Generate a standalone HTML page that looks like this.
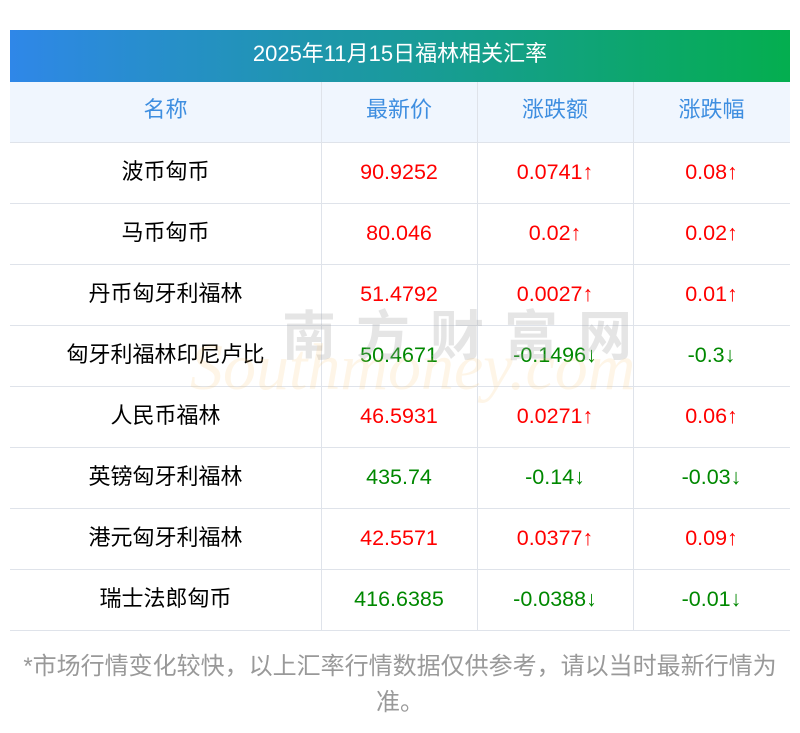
<!DOCTYPE html>
<html><head><meta charset="utf-8"><style>
body{margin:0;width:800px;height:733px;background:#fff;font-family:"Liberation Sans","Noto Sans CJK SC",sans-serif;position:relative;overflow:hidden}
.title{position:absolute;left:10px;top:30px;width:780px;height:52px;background:linear-gradient(90deg,#2f87e8,#04ae4f);color:#fff;font-size:22px;line-height:48px;text-align:center}
.row{position:absolute;left:10px;width:780px;height:61px;border-bottom:1px solid #dfe3ea;box-sizing:border-box;display:flex}
.row div{height:60px;line-height:60px;text-align:center;font-size:21.5px;box-sizing:border-box}
.row div.c1{font-size:22px}
.row div span{position:relative;top:-1px}
.c1{width:311px}
.c2,.c3{width:156px}.c4{width:157px}
.h{background:#f0f6fe;color:#3e8ee0}
.row.h div{font-size:22px}
.h div span{top:-2px!important}
.vl{position:absolute;top:82px;width:1px;height:548px;background:#dfe3ea}
.r{color:#f00}.g{color:#080}
.wm1{position:absolute;left:282px;top:292px;font-size:54px;color:rgba(160,160,160,.28);letter-spacing:20px;font-weight:bold}
.wm2{position:absolute;left:190px;top:330px;font-family:"Liberation Serif",serif;font-style:italic;font-size:66px;color:rgba(250,200,120,.18)}
.note{position:absolute;left:0;top:649px;width:800px;text-align:center;color:#999;font-size:24px;line-height:36px}
</style></head><body>
<div class="title">2025年11月15日福林相关汇率</div>
<div class="row h" style="top:82px"><div class="c1"><span>名称</span></div><div class="c2"><span>最新价</span></div><div class="c3"><span>涨跌额</span></div><div class="c4"><span>涨跌幅</span></div></div>
<div class="row" style="top:143px"><div class="c1"><span>波币匈币</span></div><div class="c2 r"><span>90.9252</span></div><div class="c3 r"><span>0.0741↑</span></div><div class="c4 r"><span>0.08↑</span></div></div>
<div class="row" style="top:204px"><div class="c1"><span>马币匈币</span></div><div class="c2 r"><span>80.046</span></div><div class="c3 r"><span>0.02↑</span></div><div class="c4 r"><span>0.02↑</span></div></div>
<div class="row" style="top:265px"><div class="c1"><span>丹币匈牙利福林</span></div><div class="c2 r"><span>51.4792</span></div><div class="c3 r"><span>0.0027↑</span></div><div class="c4 r"><span>0.01↑</span></div></div>
<div class="row" style="top:326px"><div class="c1"><span>匈牙利福林印尼卢比</span></div><div class="c2 g"><span>50.4671</span></div><div class="c3 g"><span>-0.1496↓</span></div><div class="c4 g"><span>-0.3↓</span></div></div>
<div class="row" style="top:387px"><div class="c1"><span>人民币福林</span></div><div class="c2 r"><span>46.5931</span></div><div class="c3 r"><span>0.0271↑</span></div><div class="c4 r"><span>0.06↑</span></div></div>
<div class="row" style="top:448px"><div class="c1"><span>英镑匈牙利福林</span></div><div class="c2 g"><span>435.74</span></div><div class="c3 g"><span>-0.14↓</span></div><div class="c4 g"><span>-0.03↓</span></div></div>
<div class="row" style="top:509px"><div class="c1"><span>港元匈牙利福林</span></div><div class="c2 r"><span>42.5571</span></div><div class="c3 r"><span>0.0377↑</span></div><div class="c4 r"><span>0.09↑</span></div></div>
<div class="row" style="top:570px"><div class="c1"><span>瑞士法郎匈币</span></div><div class="c2 g"><span>416.6385</span></div><div class="c3 g"><span>-0.0388↓</span></div><div class="c4 g"><span>-0.01↓</span></div></div>
<div class="vl" style="left:321px"></div><div class="vl" style="left:477px"></div><div class="vl" style="left:633px"></div>
<div class="wm1">南方财富网</div>
<div class="wm2">Southmoney.com</div>
<div class="note">*市场行情变化较快，以上汇率行情数据仅供参考，请以当时最新行情为<br>准。</div>
</body></html>
